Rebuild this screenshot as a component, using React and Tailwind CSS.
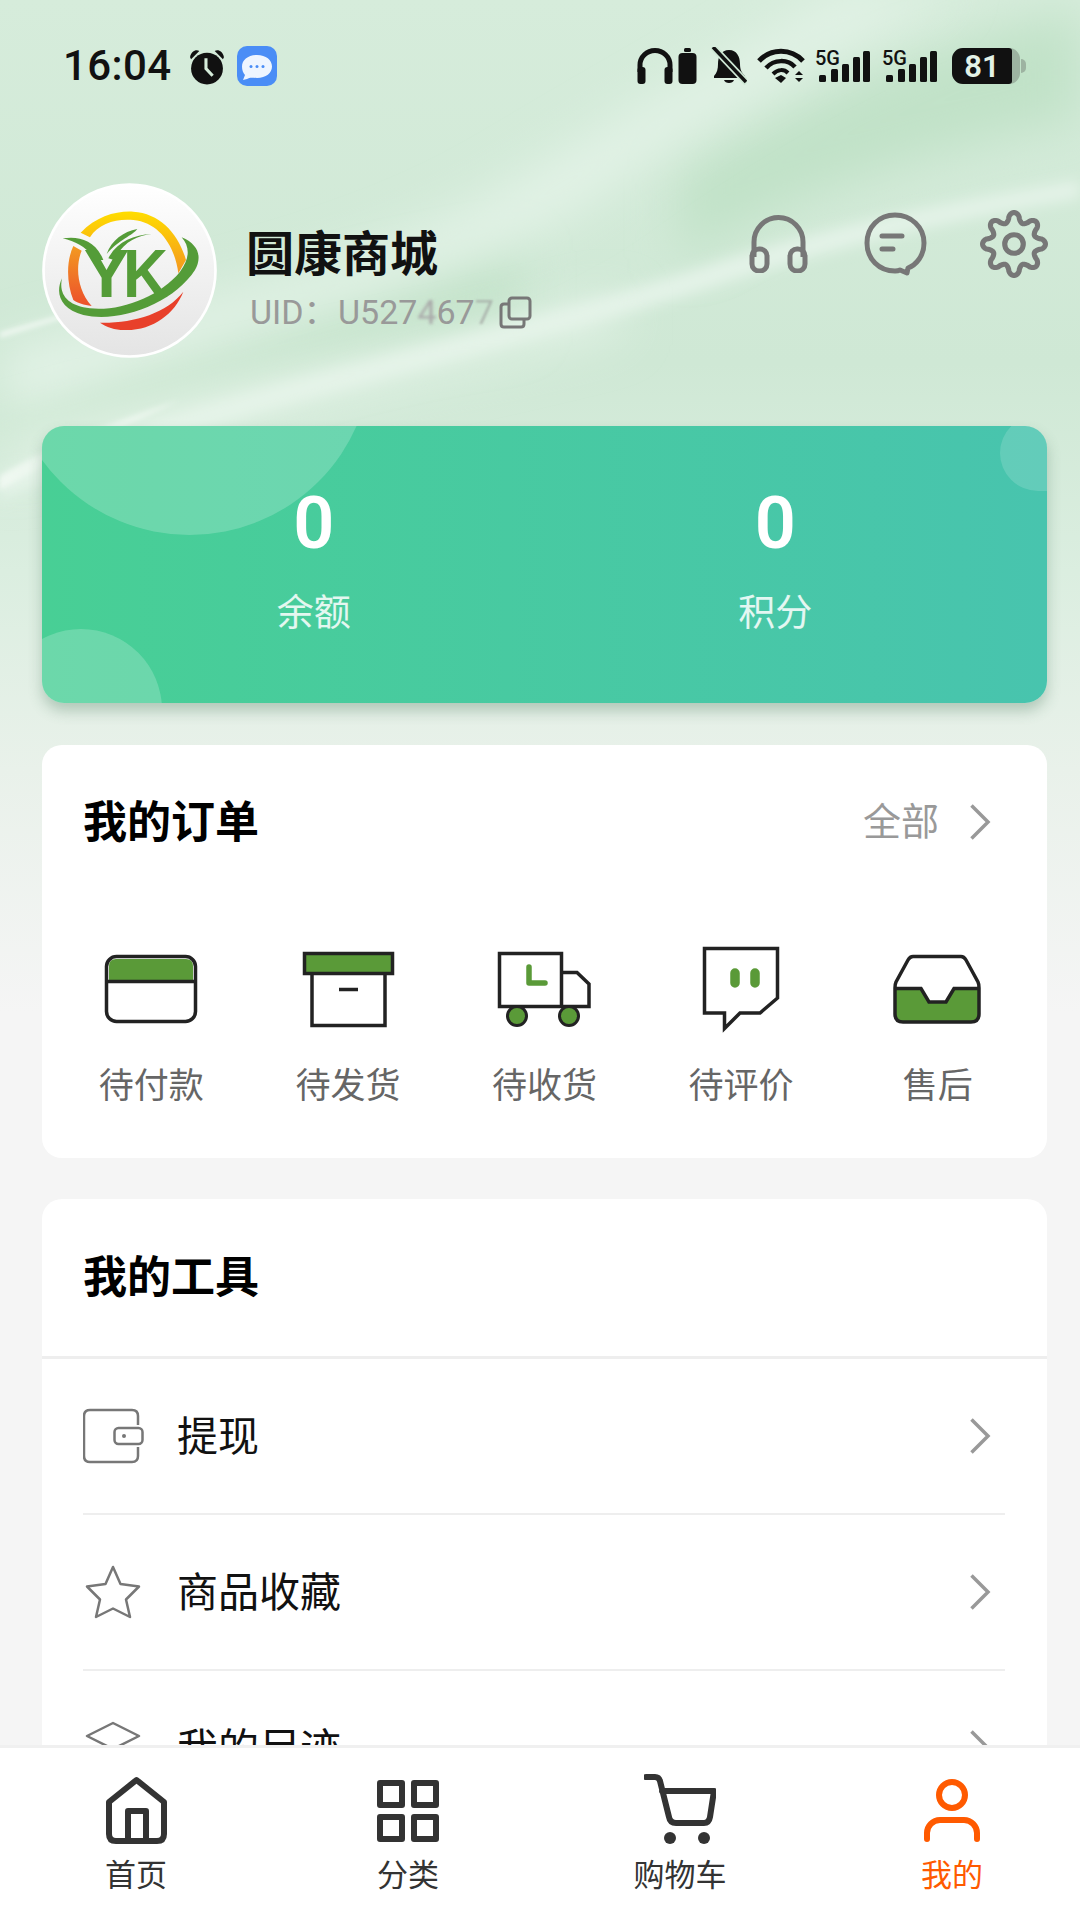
import { useMemo } from 'react';

const FONT = "font-['Roboto','Noto_Sans_CJK_SC',sans-serif]";
const GREEN = '#5a9a38';
const LINE = '#222222';

function gearPath(cx, cy, base, amp, lobes) {
  const points = [];
  for (let i = 0; i < 240; i += 1) {
    const angle = (i / 240) * Math.PI * 2;
    const wave = Math.cos(angle * lobes);
    const radius = base + amp * Math.sign(wave) * Math.pow(Math.abs(wave), 0.7);
    const x = cx + radius * Math.sin(angle);
    const y = cy - radius * Math.cos(angle);
    points.push(`${x.toFixed(2)} ${y.toFixed(2)}`);
  }
  return `M${points.join('L')}Z`;
}

function Background() {
  return (
    <svg className="absolute left-0 top-0" width="1080" height="1100" viewBox="0 0 1080 1100">
      <defs>
        <linearGradient id="bg-fade" x1="0" y1="0" x2="0" y2="1">
          <stop offset="0" stopColor="#d6ecdb" />
          <stop offset="0.33" stopColor="#cfe8d5" />
          <stop offset="0.52" stopColor="#dbeee0" />
          <stop offset="0.7" stopColor="#e9f1ea" />
          <stop offset="0.92" stopColor="#f5f5f5" />
        </linearGradient>
        <filter id="soft-a" x="-30%" y="-30%" width="160%" height="160%"><feGaussianBlur stdDeviation="24" /></filter>
        <filter id="soft-b"><feGaussianBlur stdDeviation="7" /></filter>
        <filter id="soft-c"><feGaussianBlur stdDeviation="2.5" /></filter>
      </defs>
      <rect width="1080" height="1100" fill="url(#bg-fade)" />
      <path d="M680 170 C790 110 900 50 1080 10 L1080 120 C930 150 800 190 680 260 Z" fill="#c1e2c8" filter="url(#soft-a)" />
      <path d="M0 390 C150 350 320 280 520 250 L520 330 C340 350 160 420 0 470 Z" fill="#c2e2c9" filter="url(#soft-a)" />
      <path d="M500 190 C620 120 720 60 850 -10 L960 -10 C820 50 700 120 590 200 C440 290 250 330 0 420 L0 350 C190 300 360 270 500 190 Z" fill="#e3f3e7" filter="url(#soft-a)" />
      <path d="M0 476 C170 400 440 350 700 268 C830 225 960 200 1080 180 L1080 198 C960 218 840 245 710 288 C450 370 180 420 0 500 Z" fill="#e4f3e8" filter="url(#soft-b)" />
      <path d="M0 476 C60 440 120 420 180 400 C120 430 60 455 0 490 Z" fill="#f2f9f3" filter="url(#soft-c)" />
      <path d="M0 332 L70 312 L74 315 L0 338 Z" fill="#eef7f0" filter="url(#soft-c)" />
      <path d="M0 440 C200 380 420 350 620 300 L620 330 C420 380 200 420 0 480 Z" fill="#e6f4e9" filter="url(#soft-a)" />
    </svg>
  );
}

function AlarmIcon() {
  return (
    <svg className="ml-[16px]" width="38" height="37" viewBox="0 0 37 36">
      <path d="M2 9 C3 3 8 1 11 3 L3 11 Z M35 9 C34 3 29 1 26 3 L34 11 Z" fill="#111" />
      <circle cx="18.5" cy="20" r="15.5" fill="#111" />
      <path d="M17.5 10 V20 L24 27" stroke="#d5ecda" strokeWidth="3" fill="none" />
    </svg>
  );
}

function MessageBadge() {
  return (
    <svg className="ml-[11px]" width="40" height="40" viewBox="0 0 40 40">
      <rect width="40" height="40" rx="10" fill="#4a8df6" />
      <path d="M20 9 C29 9 35 14 35 20.5 C35 27 29 32 20 32 C16 32 13 31 10 33 L6 34 L8 29 C6 27 5 24 5 20.5 C5 14 11 9 20 9 Z" fill="#eef5ff" />
      <circle cx="14" cy="20.5" r="1.5" fill="#4a8df6" />
      <circle cx="20" cy="20.5" r="1.5" fill="#4a8df6" />
      <circle cx="26" cy="20.5" r="1.5" fill="#4a8df6" />
    </svg>
  );
}

function SignalIcon({ className }) {
  return (
    <svg className={className} width="55" height="36" viewBox="0 0 55 36">
      <text x="0" y="17" fontFamily="Roboto" fontSize="20" fontWeight="500" fill="#111">5G</text>
      <rect x="4" y="27" width="7" height="7" rx="1.5" fill="#111" />
      <rect x="16" y="21" width="7" height="13" rx="1.5" fill="#111" />
      <rect x="27" y="16" width="7" height="18" rx="1.5" fill="#111" />
      <rect x="38" y="9" width="7" height="25" rx="1.5" fill="#111" />
      <rect x="48" y="3" width="7" height="31" rx="1.5" fill="#111" />
    </svg>
  );
}

function StatusBar() {
  return (
    <div className="flex h-[132px] items-center pl-[63px] pr-[54px]">
      <span className="w-[109px] text-[42px] font-medium leading-none tracking-[0.4px] text-[#111] font-['Roboto',sans-serif]">16:04</span>
      <AlarmIcon />
      <MessageBadge />
      <div className="ml-auto flex items-center">
        <svg width="36" height="36" viewBox="0 0 36 36">
          <path d="M3 24 V17 A15 14.5 0 0 1 33 17 V24" stroke="#111" strokeWidth="5" fill="none" />
          <rect x="0.5" y="19" width="8" height="17" rx="3" fill="#111" />
          <rect x="27.5" y="19" width="8" height="17" rx="3" fill="#111" />
        </svg>
        <svg className="ml-[5px]" width="19" height="36" viewBox="0 0 19 36">
          <rect x="6" y="0" width="7" height="4" rx="1.5" fill="#111" />
          <rect x="0.5" y="5" width="18" height="31" rx="4" fill="#111" />
        </svg>
        <svg className="ml-[14px]" width="36" height="38" viewBox="0 0 36 38">
          <path d="M18 3 C26 3 29 10 29 17 C29 23 31 26 34 29 V31 H3 V29 C6 26 7 22 7 17 C7 10 10 3 18 3 Z" fill="#111" />
          <path d="M13 33 H23 C22 37 14 37 13 33 Z" fill="#111" />
          <path d="M1 -1 L36 36" stroke="#cfe8d5" strokeWidth="7" />
          <path d="M2 0 L35 35" stroke="#111" strokeWidth="3.5" />
        </svg>
        <svg className="ml-[10px]" width="48" height="36" viewBox="0 0 48 36">
          <path d="M2 13 C14 0 34 0 46 13" stroke="#111" strokeWidth="5" fill="none" />
          <path d="M9 20 C17 11 31 11 38 19" stroke="#111" strokeWidth="4.5" fill="none" />
          <path d="M16 26 C21 21 27 21 31 25" stroke="#111" strokeWidth="4" fill="none" />
          <path d="M18 30 L24 27 L29 30 L24 35 Z" fill="#111" />
          <path d="M38 27 L42 23 L46 27 Z M38 30 L46 30 L42 34 Z" fill="#111" />
        </svg>
        <SignalIcon className="ml-[10px]" />
        <SignalIcon className="ml-[12px]" />
        <div className="ml-[15px] flex items-center">
          <div className="h-[36px] w-[68px] overflow-hidden rounded-[11px] bg-[#9db3a1]">
            <div className="flex h-full w-[60px] items-center justify-center rounded-r-[3px] bg-[#111]">
              <span className="text-[31px] font-semibold leading-none text-[#e3f2e6] font-['Roboto',sans-serif]">81</span>
            </div>
          </div>
          <div className="ml-[1px] h-[14px] w-[5px] rounded-r-full bg-[#9db3a1]" />
        </div>
      </div>
    </div>
  );
}

function AvatarLogo() {
  return (
    <svg className="shrink-0" width="175" height="175" viewBox="6 9 525 525">
      <defs>
        <linearGradient id="av-bg" x1="0" y1="0" x2="0" y2="1">
          <stop offset="0" stopColor="#ffffff" />
          <stop offset="1" stopColor="#e4e4e4" />
        </linearGradient>
        <linearGradient id="av-ring" x1="0" y1="0" x2="0" y2="1">
          <stop offset="0" stopColor="#ffdd00" />
          <stop offset="1" stopColor="#f4961f" />
        </linearGradient>
        <linearGradient id="av-left" x1="0" y1="0" x2="0" y2="1">
          <stop offset="0" stopColor="#f39a22" />
          <stop offset="1" stopColor="#ec4f2b" />
        </linearGradient>
      </defs>
      <circle cx="268.5" cy="271.5" r="258" fill="url(#av-bg)" stroke="#ffffff" strokeWidth="8" />
      <path d="M122 158 C170 108 230 92 280 95 C360 100 415 160 438 240 L415 280 C405 200 360 128 280 120 C230 115 175 130 150 172 Z" fill="url(#av-ring)" />
      <path d="M100 198 L125 212 C105 260 112 330 155 378 C130 375 115 370 100 360 C80 310 78 245 100 198 Z" fill="url(#av-left)" />
      <path d="M180 428 C280 430 380 400 430 335 C405 400 340 450 260 450 C230 452 200 442 180 428 Z" fill="#e8402a" />
      <text x="131" y="352" fontFamily="Liberation Sans" fontSize="205" fontWeight="700" fill="#549c38">Y</text>
      <text x="249" y="352" fontFamily="Liberation Sans" fontSize="205" fontWeight="700" fill="#549c38" textLength="135" lengthAdjust="spacingAndGlyphs">K</text>
      <path d="M68 175 C115 168 165 178 190 240 L165 240 C145 205 110 185 68 175 Z" fill="#549c38" />
      <path d="M335 162 C290 168 250 185 222 240 L205 235 C230 185 280 165 335 162 Z" fill="#549c38" />
      <path d="M200 222 C215 180 250 155 292 147 C280 165 235 180 200 222 Z" fill="#549c38" />
      <path d="M66 295 C45 340 60 385 130 405 C240 430 400 370 465 270 C485 235 480 195 425 172 C450 200 450 235 420 275 C360 350 240 395 150 385 C85 378 55 345 66 295 Z" fill="#549c38" />
    </svg>
  );
}

function HeaderActions() {
  const gear = useMemo(() => gearPath(33, 33, 26, 4.5, 8), []);
  return (
    <div className="ml-auto mt-[27px] flex items-center self-start">
      <svg width="59" height="58" viewBox="0 0 59 58">
        <path d="M5 42 V27 A24.5 24.5 0 0 1 54 27 V42" stroke="#777" strokeWidth="5" fill="none" />
        <rect x="3" y="34" width="15" height="22" rx="7" stroke="#777" strokeWidth="5" fill="none" />
        <rect x="41" y="34" width="15" height="22" rx="7" stroke="#777" strokeWidth="5" fill="none" />
      </svg>
      <svg className="ml-[56px]" width="63" height="64" viewBox="0 0 63 64">
        <path d="M31 3 C47 3 60 15 60 31 C60 44 52 53 44 56 L43 61 L36 58 C34 59 33 59 31 59 C15 59 3 47 3 31 C3 15 15 3 31 3 Z" stroke="#777" strokeWidth="5" strokeLinejoin="round" fill="none" />
        <path d="M18 24 H38 M18 37 H29" stroke="#777" strokeWidth="5" strokeLinecap="round" />
      </svg>
      <svg className="ml-[53px]" width="68" height="68" viewBox="0 0 66 66">
        <path d={gear} stroke="#777" strokeWidth="5" strokeLinejoin="round" fill="none" />
        <circle cx="33" cy="33" r="9" stroke="#777" strokeWidth="5" fill="none" />
      </svg>
    </div>
  );
}

function ProfileHeader() {
  return (
    <div className="flex h-[175px] pl-[42px] pr-[32px]">
      <AvatarLogo />
      <div className="ml-[29px] flex flex-col pt-[42px]">
        <span className="text-[48px] font-bold leading-[60px] text-[#111]">圆康商城</span>
        <div className="mt-[7px] flex items-center pl-[4px] text-[34px] leading-[40px] text-[#999]">
          <span className="w-[88px]">UID：</span>
          <span className="w-[161px] whitespace-nowrap">
            U527<span className="text-[#a9a9a9] blur-[1.5px]">4</span>67<span className="opacity-60 blur-[0.8px]">7</span>
          </span>
          <svg width="33" height="33" viewBox="0 0 33 33">
            <rect x="10" y="2" width="21" height="21" rx="3" stroke="#777" strokeWidth="3" fill="none" />
            <path d="M10 8 H5 Q2 8 2 11 V28 Q2 31 5 31 H22 Q25 31 25 28 V23" stroke="#777" strokeWidth="3" fill="none" />
          </svg>
        </div>
      </div>
      <HeaderActions />
    </div>
  );
}

function Stat({ value, label }) {
  return (
    <div className="flex flex-col items-center">
      <span className="text-[72px] font-semibold leading-[80px] text-white">{value}</span>
      <span className="mt-[27px] text-[37px] leading-[46px] text-white/85">{label}</span>
    </div>
  );
}

function BalanceCard() {
  return (
    <section className="relative ml-[42px] mr-[33px] mt-[68px] h-[277px]">
      <div className="absolute inset-0 overflow-hidden rounded-[22px] bg-gradient-to-r from-[#48cf95] to-[#48c4ae] shadow-[0_8px_14px_rgba(60,110,80,0.3)]">
        <div className="absolute left-[-35px] top-[-256px] h-[365px] w-[365px] rounded-full bg-white/20" />
        <div className="absolute left-[-42px] top-[203px] h-[162px] w-[162px] rounded-full bg-white/20" />
        <div className="absolute left-[958px] top-[-11px] h-[76px] w-[90px] rounded-full bg-white/15" />
      </div>
      <div className="relative grid grid-cols-2 px-[41px] pt-[58px]">
        <Stat value="0" label="余额" />
        <Stat value="0" label="积分" />
      </div>
    </section>
  );
}

function Chevron({ className }) {
  return (
    <svg className={className} width="22" height="38" viewBox="0 0 22 38">
      <path d="M2.5 2.5 L19 19 L2.5 35.5" stroke="#999" strokeWidth="3.5" fill="none" />
    </svg>
  );
}

function OrderIcon({ children }) {
  return (
    <svg width="100" height="90" viewBox="0 0 100 90" fill="none">
      {children}
    </svg>
  );
}

const ORDER_ITEMS = [
  {
    label: '待付款',
    icon: (
      <OrderIcon>
        <path d="M8 37 V22 Q8 15 15 15 H85 Q92 15 92 22 V37 Z" fill={GREEN} />
        <rect x="5.5" y="12.5" width="89" height="65" rx="10" stroke={LINE} strokeWidth="3.5" />
        <path d="M5.5 37.5 H94.5" stroke={LINE} strokeWidth="3.5" />
      </OrderIcon>
    ),
  },
  {
    label: '待发货',
    icon: (
      <OrderIcon>
        <rect x="6.5" y="9.5" width="88" height="20" fill={GREEN} stroke={LINE} strokeWidth="3.5" />
        <path d="M14 30 V81.5 H87 V30" stroke={LINE} strokeWidth="3.5" />
        <path d="M41 45.5 H60" stroke={LINE} strokeWidth="3.5" />
      </OrderIcon>
    ),
  },
  {
    label: '待收货',
    icon: (
      <OrderIcon>
        <rect x="5.5" y="9.5" width="62" height="53" stroke={LINE} strokeWidth="3.5" />
        <path d="M67.5 28.5 H83 L95 40 V62.5 H67.5" stroke={LINE} strokeWidth="3.5" />
        <path d="M35 23 V39 H51" stroke={GREEN} strokeWidth="5.5" strokeLinecap="round" strokeLinejoin="round" />
        <circle cx="23" cy="72" r="9.5" fill={GREEN} stroke={LINE} strokeWidth="3" />
        <circle cx="75" cy="72" r="9.5" fill={GREEN} stroke={LINE} strokeWidth="3" />
      </OrderIcon>
    ),
  },
  {
    label: '待评价',
    icon: (
      <OrderIcon>
        <path d="M13.5 4.5 H86.5 V54 L69 69 H49 L33.5 84.5 V69 H13.5 Z" stroke={LINE} strokeWidth="3.5" />
        <path d="M44 29 V39 M64 29 V39" stroke={GREEN} strokeWidth="9.5" strokeLinecap="round" />
      </OrderIcon>
    ),
  },
  {
    label: '售后',
    icon: (
      <OrderIcon>
        <path d="M8 44 H33 L41 58 H58 L66 44 H90 V70 Q90 78 83 78 H15 Q8 78 8 70 Z" fill={GREEN} />
        <path d="M25 12.5 H73 Q76 12.5 78 16 L90 38 Q91 40 91 44 V70 Q91 78 83 78 H15 Q7 78 7 70 V44 Q7 40 8 38 L20 16 Q22 12.5 25 12.5 Z" stroke={LINE} strokeWidth="3.5" />
        <path d="M7 44.5 H33 L41 58 H58 L66 44.5 H91" stroke={LINE} strokeWidth="3.5" />
      </OrderIcon>
    ),
  },
];

function OrdersCard() {
  return (
    <section className="ml-[42px] mr-[33px] mt-[42px] rounded-[20px] bg-white pb-[47px]">
      <div className="flex h-[154px] items-center justify-between pl-[41px] pr-[56px]">
        <h2 className="pt-[2px] text-[44px] font-bold text-black">我的订单</h2>
        <div className="flex items-center">
          <span className="text-[38px] text-[#999]">全部</span>
          <Chevron className="ml-[30px]" />
        </div>
      </div>
      <div className="mt-[45px] grid grid-cols-5 px-[11px]">
        {ORDER_ITEMS.map((item) => (
          <div key={item.label} className="flex flex-col items-center">
            {item.icon}
            <span className="mt-[29px] text-[35px] leading-[48px] text-[#666]">{item.label}</span>
          </div>
        ))}
      </div>
    </section>
  );
}

const TOOL_ITEMS = [
  {
    label: '提现',
    icon: (
      <>
        <path d="M55 19 V10 Q55 4 49 4 H7 Q1 4 1 10 V50 Q1 56 7 56 H49 Q55 56 55 50 V41" stroke="#777" strokeWidth="2.5" />
        <rect x="31.5" y="22" width="28" height="16" rx="4" stroke="#777" strokeWidth="2.5" />
        <circle cx="41" cy="30" r="2" fill="#777" />
      </>
    ),
  },
  {
    label: '商品收藏',
    icon: <path d="M30 5 L37.5 22 L56 24.5 L43 37.5 L47 55 L30 46.5 L13 55 L17 37.5 L4 24.5 L22.5 22 Z" stroke="#777" strokeWidth="2.5" strokeLinejoin="round" />,
  },
  {
    label: '我的足迹',
    icon: (
      <>
        <path d="M30 5 L56 18 L30 31 L4 18 Z" stroke="#777" strokeWidth="2.5" strokeLinejoin="round" />
        <path d="M4 30 L30 43 L56 30" stroke="#777" strokeWidth="2.5" />
      </>
    ),
  },
];

function ToolsCard() {
  return (
    <section className="ml-[42px] mr-[33px] mt-[41px] rounded-t-[20px] bg-white">
      <div className="flex h-[157px] items-center pl-[41px]">
        <h2 className="text-[44px] font-bold text-black">我的工具</h2>
      </div>
      <div className="border-t-[3px] border-[#eeeeee] pl-[41px] pr-[42px]">
        {TOOL_ITEMS.map((item) => (
          <div key={item.label} className="flex h-[156px] items-center border-b-2 border-[#eeeeee] pr-[14px]">
            <svg className="shrink-0" width="61" height="60" viewBox="0 0 61 60" fill="none">
              {item.icon}
            </svg>
            <span className="ml-[33px] pt-[3px] text-[41px] text-[#111]">{item.label}</span>
            <Chevron className="ml-auto" />
          </div>
        ))}
      </div>
    </section>
  );
}

const TABS = [
  {
    label: '首页',
    icon: (
      <>
        <path d="M36.5 7 L64 29 V61 Q64 68 57 68 H16 Q9 68 9 61 V29 Z" stroke="#333" strokeWidth="6" strokeLinejoin="round" />
        <path d="M28 68 V38 H46 V68" stroke="#333" strokeWidth="6" strokeLinejoin="round" />
      </>
    ),
  },
  {
    label: '分类',
    icon: (
      <>
        <rect x="8" y="10" width="22" height="22" stroke="#333" strokeWidth="6" strokeLinejoin="round" />
        <rect x="42" y="10" width="22" height="22" stroke="#333" strokeWidth="6" strokeLinejoin="round" />
        <rect x="8" y="44" width="22" height="22" stroke="#333" strokeWidth="6" strokeLinejoin="round" />
        <rect x="42" y="44" width="22" height="22" stroke="#333" strokeWidth="6" strokeLinejoin="round" />
      </>
    ),
  },
  {
    label: '购物车',
    icon: (
      <>
        <path d="M2 4 H11 Q15 4 16 8 L25 44 Q26 50 32 50 H60 Q65 50 66 44 L70 18 H18" stroke="#333" strokeWidth="6" strokeLinecap="round" strokeLinejoin="round" />
        <circle cx="26" cy="65" r="6" fill="#333" />
        <circle cx="60" cy="65" r="6" fill="#333" />
      </>
    ),
  },
  {
    label: '我的',
    active: true,
    icon: (
      <>
        <circle cx="36" cy="22" r="13" stroke="#ff5a00" strokeWidth="6" />
        <path d="M11 66 V60 A13 13 0 0 1 24 47 H48 A13 13 0 0 1 61 60 V66" stroke="#ff5a00" strokeWidth="6" strokeLinecap="round" />
      </>
    ),
  },
];

function TabBar() {
  return (
    <nav className="relative h-[175px] shrink-0 overflow-hidden border-t-[3px] border-[#f0f0f0] bg-white">
      <div className="grid w-[1088px] grid-cols-4 pt-[25px]">
        {TABS.map((tab) => (
          <div key={tab.label} className="flex flex-col items-center">
            <svg width="72" height="72" viewBox="0 0 72 72" fill="none">
              {tab.icon}
            </svg>
            <span className={tab.active ? 'mt-[11px] text-[31px] leading-[40px] text-[#ff5a00]' : 'mt-[11px] text-[31px] leading-[40px] text-[#333]'}>
              {tab.label}
            </span>
          </div>
        ))}
      </div>
    </nav>
  );
}

export default function App() {
  return (
    <div className={`relative flex h-[1920px] w-[1080px] flex-col overflow-hidden bg-[#f5f5f5] ${FONT}`}>
      <Background />
      <main className="relative min-h-0 flex-1 overflow-hidden">
        <StatusBar />
        <div className="mt-[51px]">
          <ProfileHeader />
        </div>
        <BalanceCard />
        <OrdersCard />
        <ToolsCard />
      </main>
      <TabBar />
    </div>
  );
}
